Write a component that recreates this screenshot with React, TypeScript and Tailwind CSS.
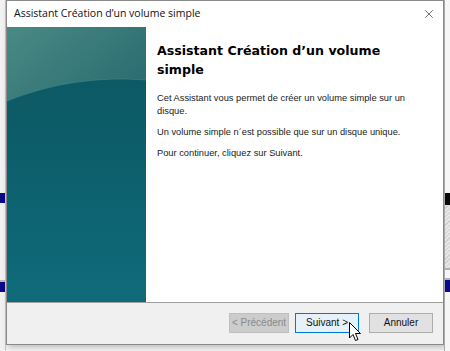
import { X } from 'lucide-react';

// Left teal artwork of the wizard
function WizardArt() {
  return (
    <svg width="139" height="275" viewBox="0 0 139 275" className="block">
      <defs>
        <linearGradient id="top" x1="0" y1="0" x2="1" y2="0.6">
          <stop offset="0" stopColor="#4a8a84" />
          <stop offset="1" stopColor="#2c6e72" />
        </linearGradient>
        <linearGradient id="bottom" x1="0" y1="0" x2="0" y2="1">
          <stop offset="0" stopColor="#0b5660" />
          <stop offset="0.5" stopColor="#0d5f6c" />
          <stop offset="1" stopColor="#0f6b7b" />
        </linearGradient>
      </defs>
      <rect width="139" height="275" fill="url(#bottom)" />
      <path d="M0 0 H139 V53 C110 51 60 50 0 74 Z" fill="url(#top)" />
      <path d="M0 74 C60 50 110 51 139 53" fill="none" stroke="#4f8d8c" strokeOpacity="0.5" strokeWidth="1" />
    </svg>
  );
}

function Cursor() {
  return (
    <svg width="13" height="20" viewBox="0 0 13 20" className="absolute left-[349px] top-[322px]">
      <path d="M0.5 0.5 V16 L4 12.5 L6.5 18.5 L9 17.5 L6.5 11.5 H11.5 Z" fill="#fff" stroke="#000" strokeWidth="1" strokeLinejoin="round" />
    </svg>
  );
}

export default function App() {
  return (
    <div className="relative w-[450px] h-[351px] overflow-hidden bg-[#f4f4f4] flex" style={{ fontFamily: '"Liberation Sans", Arial, sans-serif' }}>
      {/* left desktop strip */}
      <div className="w-[6px] flex flex-col border-r border-[#c8c8c8] bg-[#f2f2f2]">
        <div className="h-[193px]" />
        <div className="h-[10px] bg-[#0a0a8a]" />
        <div className="h-[79px] border-b-2 border-[#b8b8b8]" />
        <div className="h-[10px] bg-[#0a0a8a]" />
      </div>

      {/* window */}
      <div className="w-[438px] h-[345px] flex flex-col bg-white border border-[#8a8a8a] shadow-[2px_2px_6px_rgba(0,0,0,0.25)]">
        <div className="h-[26px] flex items-center justify-between pl-[7px] pr-[7px]">
          <span className="text-[10.5px] text-[#111]" style={{ fontFamily: '"Open Sans", "Noto Sans", sans-serif' }}>
            Assistant Création d’un volume simple
          </span>
          <X className="w-[14px] h-[14px] text-[#333]" strokeWidth={1.2} />
        </div>

        <div className="flex h-[275px]">
          <div className="w-[139px] border-r-2 border-[#d4d4d4]">
            <WizardArt />
          </div>
          <div className="flex-1 pl-[11px] pr-4 pt-[14px]">
            <h1 className="text-[12.6px] leading-[19px] font-bold text-black" style={{ fontFamily: '"DejaVu Sans", Verdana, sans-serif' }}>
              Assistant Création d’un volume
              <br />
              simple
            </h1>
            <div className="mt-[13px] text-[9.3px] leading-[13px] text-[#1a1a1a] flex flex-col gap-[8px] pr-[10px]">
              <p>Cet Assistant vous permet de créer un volume simple sur un disque.</p>
              <p>Un volume simple n´est possible que sur un disque unique.</p>
              <p>Pour continuer, cliquez sur Suivant.</p>
            </div>
          </div>
        </div>

        <div className="flex-1 bg-[#f0f0f0] border-t border-[#a0a0a0] flex items-center justify-end pr-[10px] pb-[2px] text-[10px]">
          <button className="w-[60px] h-[20px] bg-[#cccccc] border border-[#bfbfbf] text-[#8a8a8a]">
            &lt; Précédent
          </button>
          <button className="ml-[6px] w-[64px] h-[20px] bg-[#e5f1fb] border border-[#0078d7] text-[#111]">
            Suivant &gt;
          </button>
          <button className="ml-[10px] w-[64px] h-[20px] bg-[#e1e1e1] border border-[#adadad] text-[#111]">
            Annuler
          </button>
        </div>
      </div>

      {/* right desktop strip */}
      <div className="flex-1 flex flex-col bg-[#f6f6f6] border-l border-[#a9a9a9]">
        <div className="h-[193px]" />
        <div className="h-[12px] bg-[#0a0a0a]" />
        <div className="h-[63px] bg-[repeating-linear-gradient(135deg,#e6e6e6_0px,#e6e6e6_2px,#cfcfcf_2px,#cfcfcf_3px)]" />
        <div className="h-[12px] border-y-2 border-[#b0b0b0]" />
        <div className="h-[12px] bg-[#0a0a8a]" />
      </div>

      <Cursor />
    </div>
  );
}
